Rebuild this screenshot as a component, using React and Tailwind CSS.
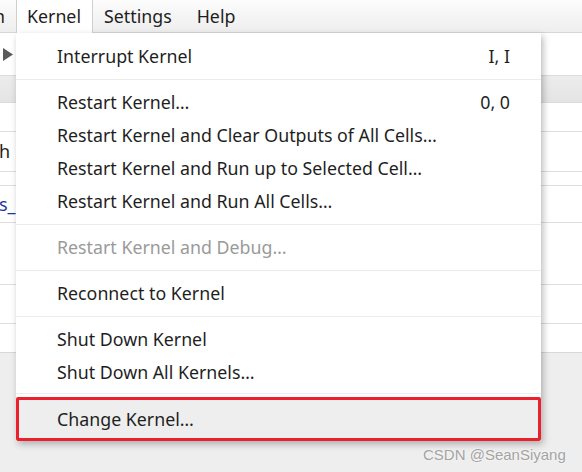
const items = [
  { label: "Interrupt Kernel", key: "I, I" },
  "sep",
  { label: "Restart Kernel…", key: "0, 0" },
  { label: "Restart Kernel and Clear Outputs of All Cells…" },
  { label: "Restart Kernel and Run up to Selected Cell…" },
  { label: "Restart Kernel and Run All Cells…" },
  "sep",
  { label: "Restart Kernel and Debug…", disabled: true },
  "sep",
  { label: "Reconnect to Kernel" },
  "sep",
  { label: "Shut Down Kernel" },
  { label: "Shut Down All Kernels…" },
];

function MenuBar() {
  return (
    <div className="h-[33px] flex items-stretch bg-gradient-to-b from-[#fcfcfc] to-[#eeeeee] border-b border-[#d6d6d6] text-[17.8px] text-[#1e1e1e]">
      <div className="w-[16px] overflow-hidden flex items-center">
        <span className="ml-[-6px]">n</span>
      </div>
      <div className="w-[77px] bg-white border-x border-[#cfcfcf] flex items-center pl-[10px] mb-[-1px]">
        Kernel
      </div>
      <div className="flex items-center pl-[11px]">Settings</div>
      <div className="flex items-center pl-[25px]">Help</div>
    </div>
  );
}

function Background() {
  return (
    <div className="flex flex-col">
      <div className="h-[42px] bg-white flex items-center pl-[3px]">
        <svg width="10" height="13" viewBox="0 0 10 13">
          <path d="M0 0 L10 6.5 L0 13 Z" fill="#5a5a5a" />
        </svg>
      </div>
      <div className="h-[28px] bg-gradient-to-b from-[#ececec] to-[#e4e4e4] border-y border-[#dcdcdc]" />
      <div className="h-[29px] bg-white border-b border-[#dedede]" />
      <div className="h-[40px] bg-white border-b border-[#dedede] flex items-center text-[18px] text-[#1e1e1e]">
        <span className="ml-[-1px]">h</span>
      </div>
      <div className="h-[14px] bg-white border-b border-[#dedede]" />
      <div className="h-[37px] bg-white border-b border-[#dedede] flex items-center text-[18px] text-[#1c3a9c]">
        <span className="ml-[-1px]">s_</span>
      </div>
      <div className="h-[62px] bg-white border-b border-[#dedede]" />
      <div className="h-[39px] bg-white border-b border-[#dedede]" />
      <div className="h-[28px] bg-white" />
      <div className="h-[120px] bg-[#eeeeee] border-t border-[#d8d8d8]" />
    </div>
  );
}

function KernelMenu() {
  return (
    <div className="absolute left-[16px] top-[33px] w-[525px] bg-white pt-[7px] shadow-[2px_3px_7px_rgba(0,0,0,0.28)] text-[17.8px] text-[#1f1f1f]">
      {items.map((it, i) =>
        it === "sep" ? (
          <div key={i} className="h-[13px] flex items-center">
            <div className="h-px w-full bg-[#ececec]" />
          </div>
        ) : (
          <div
            key={i}
            className={`h-[33px] flex items-center justify-between pl-[41px] pr-[31px] ${
              it.disabled ? "text-[#9a9a9a]" : ""
            }`}
          >
            <span>{it.label}</span>
            {it.key && <span>{it.key}</span>}
          </div>
        )
      )}
      <div className="h-[8px] flex items-center">
        <div className="h-px w-full bg-[#ececec]" />
      </div>
      {/* highlighted item, boxed in red */}
      <div className="h-[44px] border-[3px] border-[#e8212c] rounded-[2px] bg-[#eeeeee] flex items-center pl-[38px]">
        Change Kernel…
      </div>
    </div>
  );
}

export default function App() {
  return (
    <div
      className="relative w-[582px] h-[472px] overflow-hidden bg-[#eeeeee]"
      style={{ fontFamily: '"Noto Sans", "Open Sans", sans-serif' }}
    >
      <MenuBar />
      <Background />
      <KernelMenu />
      <div
        className="absolute left-[423px] top-[444px] text-[15px] text-[#a3a3a3] [text-shadow:0_0_2px_#ffffff]"
        style={{ fontFamily: '"Liberation Sans", Arial, sans-serif' }}
      >
        CSDN @SeanSiyang
      </div>
    </div>
  );
}
